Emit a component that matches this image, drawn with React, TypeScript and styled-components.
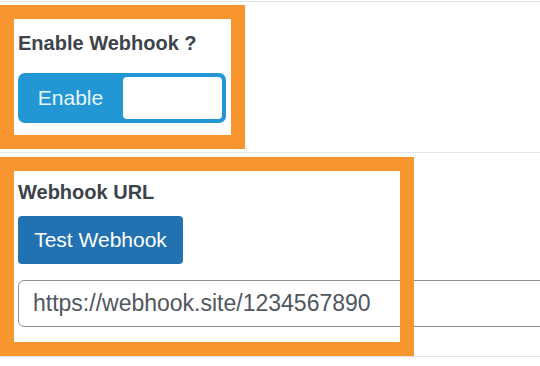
import React from "react";
import styled, { createGlobalStyle } from "styled-components";

const GlobalStyle = createGlobalStyle`
  html, body {
    margin: 0;
    padding: 0;
    background: #ffffff;
    overflow: hidden;
  }
  body {
    font-family: "Liberation Sans", Arial, sans-serif;
    color: #3c434a;
  }
  * { box-sizing: border-box; }
`;

const Page = styled.div`
  width: 540px;
  height: 366px;
  padding-top: 1px;
  overflow: hidden;
`;

const Row = styled.div<{ $top: number; $bottom: number; $last?: boolean }>`
  border-top: 1px solid #e4e5e7;
  ${(p) => (p.$last ? "border-bottom: 1px solid #e4e5e7;" : "")}
  padding-top: ${(p) => p.$top}px;
  padding-bottom: ${(p) => p.$bottom}px;
`;

const Highlight = styled.div<{ $w: number; $pt: number; $pb: number }>`
  position: relative;
  width: ${(p) => p.$w}px;
  padding: ${(p) => p.$pt}px 0 ${(p) => p.$pb}px 18px;
  display: flex;
  flex-direction: column;
  align-items: flex-start;

  &::after {
    content: "";
    position: absolute;
    inset: 0;
    border: 14px solid #f8952f;
    pointer-events: none;
    z-index: 2;
  }
`;

const Label = styled.div`
  font-size: 20px;
  line-height: 24px;
  font-weight: 700;
  color: #3c434a;
  white-space: nowrap;
`;

const Toggle = styled.div`
  margin-top: 18px;
  width: 208px;
  height: 50px;
  padding: 4px;
  background: #2297d3;
  border-radius: 7px;
  display: flex;
  align-items: stretch;
`;

const ToggleText = styled.span`
  flex: 1;
  display: flex;
  align-items: center;
  justify-content: center;
  padding-right: 4px;
  font-size: 21px;
  color: #e8f6fd;
`;

const Knob = styled.span`
  width: 99px;
  background: #ffffff;
  border-radius: 4px;
`;

const Button = styled.button`
  margin-top: 12px;
  height: 48px;
  width: 165px;
  padding: 0;
  border: none;
  border-radius: 4px;
  background: #2271b1;
  color: #ffffff;
  font-family: "Liberation Sans", Arial, sans-serif;
  font-size: 21px;
  text-align: center;
`;

const UrlInput = styled.input`
  margin-top: 16px;
  width: 540px;
  height: 47px;
  padding: 0 0 0 14px;
  border: 1px solid #8c8f94;
  border-radius: 6px;
  background: #ffffff;
  color: #50575e;
  font-family: "Liberation Sans", Arial, sans-serif;
  font-size: 23px;
  outline: none;
`;

export default function App() {
  return (
    <>
      <GlobalStyle />
      <Page>
        <Row $top={3} $bottom={3}>
          <Highlight $w={245} $pt={26} $pb={26}>
            <Label>Enable Webhook ?</Label>
            <Toggle>
              <ToggleText>Enable</ToggleText>
              <Knob />
            </Toggle>
          </Highlight>
        </Row>
        <Row $top={4} $bottom={0} $last>
          <Highlight $w={414} $pt={23} $pb={29}>
            <Label>Webhook URL</Label>
            <Button type="button">Test Webhook</Button>
            <UrlInput readOnly defaultValue="https://webhook.site/1234567890" />
          </Highlight>
        </Row>
      </Page>
    </>
  );
}
